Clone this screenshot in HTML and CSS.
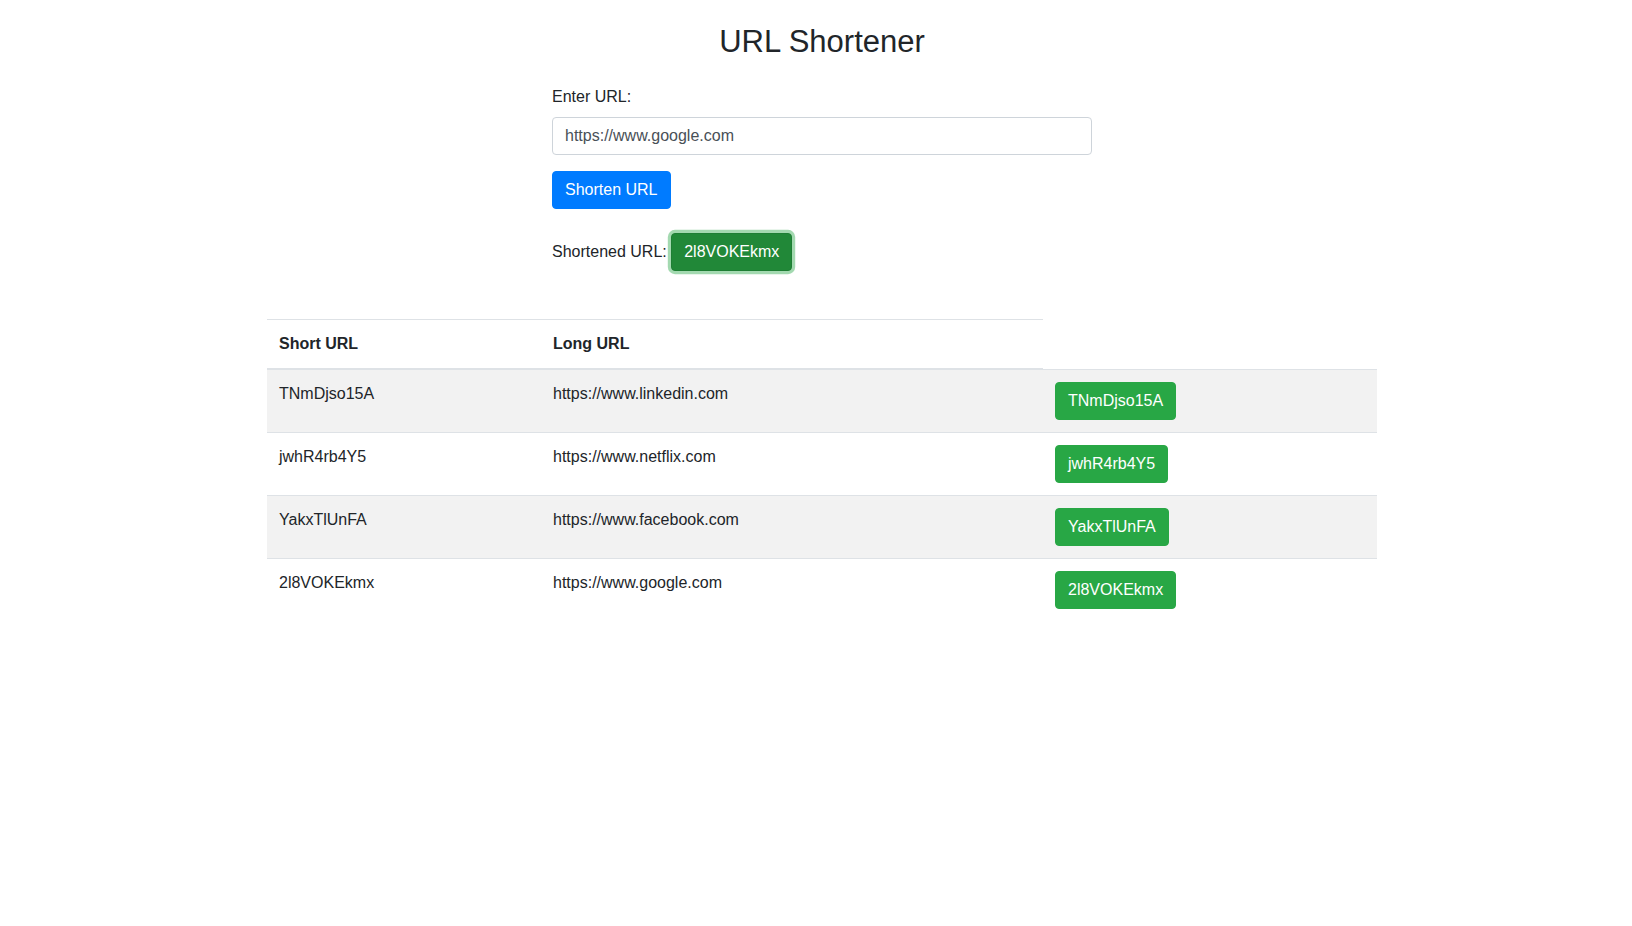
FILE: index.html
```html
<!DOCTYPE html>
<html lang="en">
<head>
<meta charset="utf-8">
<title>URL Shortener</title>
<link rel="stylesheet" href="styles.css">
</head>
<body>
<div class="page">
  <div class="container">
    <h1 class="title">URL Shortener</h1>
    <div class="form-col">
      <label class="label" for="url">Enter URL:</label>
      <input class="input" id="url" type="text" value="https://www.google.com">
      <button class="btn btn-primary shorten" type="button">Shorten URL</button>
      <div class="result">Shortened URL: <button class="btn btn-success btn-focus" type="button">2l8VOKEkmx</button></div>
    </div>
    <table class="table">
      <colgroup>
        <col class="col-short">
        <col class="col-long">
        <col class="col-btn">
      </colgroup>
      <thead>
        <tr><th>Short URL</th><th>Long URL</th></tr>
      </thead>
      <tbody>
        <tr class="striped"><td>TNmDjso15A</td><td>https://www.linkedin.com</td><td><button class="btn btn-success" type="button">TNmDjso15A</button></td></tr>
        <tr><td>jwhR4rb4Y5</td><td>https://www.netflix.com</td><td><button class="btn btn-success" type="button">jwhR4rb4Y5</button></td></tr>
        <tr class="striped"><td>YakxTlUnFA</td><td>https://www.facebook.com</td><td><button class="btn btn-success" type="button">YakxTlUnFA</button></td></tr>
        <tr><td>2l8VOKEkmx</td><td>https://www.google.com</td><td><button class="btn btn-success" type="button">2l8VOKEkmx</button></td></tr>
      </tbody>
    </table>
  </div>
</div>
</body>
</html>
```

FILE: styles.css
```css
*, *::before, *::after { box-sizing: border-box; }

html, body { margin: 0; padding: 0; background: #fff; }

body {
  font-family: "Liberation Sans", Arial, Helvetica, sans-serif;
  font-size: 16px;
  line-height: 1.5;
  color: #212529;
}

.page { padding-left: 12px; }

.container {
  max-width: 1140px;
  margin: 0 auto;
  padding: 0 15px;
}

.title {
  margin: 23px 0 25px;
  font-size: 31px;
  font-weight: 400;
  line-height: 1.2;
  text-align: center;
}

.form-col {
  width: 540px;
  margin: 0 auto;
}

.label {
  display: block;
  margin-bottom: 8px;
}

.input {
  display: block;
  width: 100%;
  height: 38px;
  padding: 6px 12px;
  font-family: inherit;
  font-size: 16px;
  line-height: 1.5;
  color: #495057;
  background: #fff;
  border: 1px solid #ced4da;
  border-radius: 4px;
  margin: 0 0 16px;
}

.btn {
  display: inline-block;
  margin: 0;
  padding: 6px 12px;
  font-family: inherit;
  font-size: 16px;
  font-weight: 400;
  line-height: 1.5;
  color: #fff;
  border: 1px solid transparent;
  border-radius: 4px;
  vertical-align: baseline;
  cursor: pointer;
}

.btn-primary { background: #007bff; border-color: #007bff; }

.btn-success { background: #28a745; border-color: #28a745; }

.btn-focus {
  background: #218838;
  border-color: #1e7e34;
  box-shadow: 0 0 0 3.2px rgba(72, 180, 97, 0.5);
}

.shorten { display: block; }

.result { margin-top: 24px; }

.table {
  width: 100%;
  margin-top: 48px;
  border-collapse: collapse;
  table-layout: fixed;
  color: #212529;
}

.col-short { width: 274px; }
.col-long { width: 502px; }
.col-btn { width: 334px; }

.table th,
.table td {
  padding: 12px;
  text-align: left;
  vertical-align: top;
  border-top: 1px solid #dee2e6;
}

.table thead th {
  font-weight: 700;
  vertical-align: bottom;
  border-bottom: 2px solid #dee2e6;
}

.table tr.striped { background: rgba(0, 0, 0, 0.05); }
```
